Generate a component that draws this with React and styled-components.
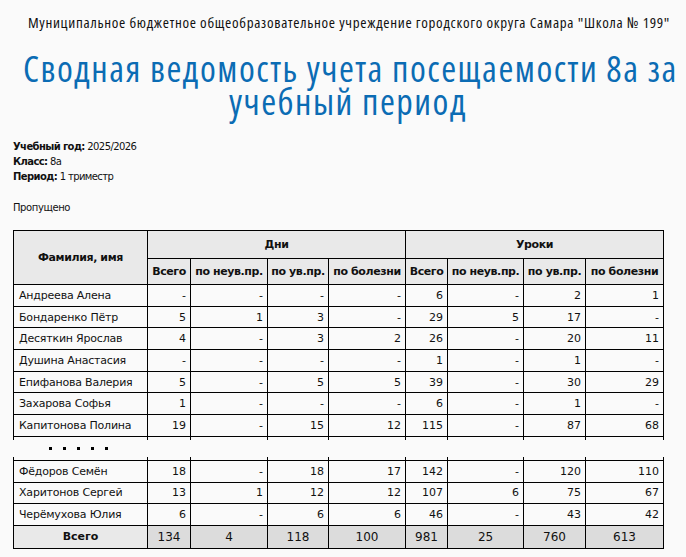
import React from "react";
import styled, { createGlobalStyle } from "styled-components";

const GlobalStyle = createGlobalStyle`
  html, body {
    margin: 0;
    padding: 0;
    background: #fafafa;
  }
  body {
    font-family: "DejaVu Sans", Verdana, sans-serif;
    color: #111;
  }
`;

const days = ["Всего", "по неув.пр.", "по ув.пр.", "по болезни"];

const topRows = [
  ["Андреева Алена", "-", "-", "-", "-", "6", "-", "2", "1"],
  ["Бондаренко Пётр", "5", "1", "3", "-", "29", "5", "17", "-"],
  ["Десяткин Ярослав", "4", "-", "3", "2", "26", "-", "20", "11"],
  ["Душина Анастасия", "-", "-", "-", "-", "1", "-", "1", "-"],
  ["Епифанова Валерия", "5", "-", "5", "5", "39", "-", "30", "29"],
  ["Захарова Софья", "1", "-", "-", "-", "6", "-", "1", "-"],
  ["Капитонова Полина", "19", "-", "15", "12", "115", "-", "87", "68"],
];

const bottomRows = [
  ["Фёдоров Семён", "18", "-", "18", "17", "142", "-", "120", "110"],
  ["Харитонов Сергей", "13", "1", "12", "12", "107", "6", "75", "67"],
  ["Черёмухова Юлия", "6", "-", "6", "6", "46", "-", "43", "42"],
];

const totals = ["134", "4", "118", "100", "981", "25", "760", "613"];

const widths = [134, 43, 77, 61, 77, 42, 76, 62, 78];

const Page = styled.div`
  padding: 12px 13px 10px 13px;
`;

const SchoolName = styled.div`
  font-family: "Open Sans", "Liberation Sans", sans-serif;
  font-stretch: 75%;
  font-size: 15px;
  letter-spacing: 0.7px;
  line-height: 20px;
  white-space: nowrap;
  text-align: center;
  padding-left: 12px;
`;

const Title = styled.h1`
  margin: 20px 0 21px;
  font-family: "Open Sans", "Liberation Sans", sans-serif;
  font-stretch: 75%;
  font-weight: normal;
  font-size: 36px;
  letter-spacing: 1.5px;
  line-height: 33px;
  white-space: nowrap;
  color: #0b6cb4;
  text-align: center;
  padding-left: 10px;
`;

const Info = styled.div`
  font-size: 10px;
  line-height: 15px;
  letter-spacing: -0.6px;
`;

const Label = styled.b`
  font-weight: bold;
`;

const Missed = styled.div`
  font-size: 10px;
  letter-spacing: -0.4px;
  margin: 18px 0 17px;
`;

const Table = styled.table`
  border-collapse: collapse;
  table-layout: fixed;
  width: 650px;
  font-size: 11px;
`;

const Head = styled.th`
  border: 1px solid #000;
  background: #e9e9e9;
  font-weight: bold;
  height: ${(p) => p.$h}px;
  padding: 0;
  letter-spacing: -0.4px;
  white-space: nowrap;
  text-align: center;
  box-sizing: border-box;
`;

const Cell = styled.td`
  border: 1px solid #000;
  height: 21.7px;
  box-sizing: border-box;
  padding: ${(p) => (p.$name ? "0 0 0 5px" : "0 4px 0 0")};
  text-align: ${(p) => (p.$name ? "left" : "right")};
  letter-spacing: ${(p) => (p.$name ? "-0.2px" : "0")};
  white-space: nowrap;
  background: #fafafa;
`;

const TotalCell = styled.td`
  border: 1px solid #000;
  height: 23px;
  box-sizing: border-box;
  text-align: center;
  font-size: ${(p) => (p.$name ? "11px" : "12px")};
  font-weight: ${(p) => (p.$name ? "bold" : "normal")};
  background: ${(p) => (p.$name ? "#e9e9e9" : "#dcdcdc")};
`;

const GapCell = styled.td`
  position: relative;
  height: 23px;
  padding: 0;
  border-top: 1px solid #000;
  border-bottom: 1px solid #000;
  border-left: none;
  border-right: none;

  &::before,
  &::after {
    content: "";
    position: absolute;
    left: -1px;
    width: 1px;
    height: 3px;
    background: #000;
  }
  &::before {
    top: 0;
  }
  &::after {
    bottom: 0;
  }
`;

const EdgeTicks = styled.span`
  &::before,
  &::after {
    content: "";
    position: absolute;
    right: 0;
    width: 1px;
    height: 3px;
    background: #000;
  }
  &::before {
    top: 0;
  }
  &::after {
    bottom: 0;
  }
`;

const Dots = styled.div`
  display: flex;
  gap: 11px;
  padding-left: 35px;
  align-items: center;
`;

const Dot = styled.span`
  width: 3px;
  height: 3px;
  background: #000;
`;

function DataRow({ row }) {
  return (
    <tr>
      {row.map((v, i) => (
        <Cell key={i} $name={i === 0}>
          {v}
        </Cell>
      ))}
    </tr>
  );
}

export default function App() {
  return (
    <>
      <GlobalStyle />
      <Page>
        <SchoolName>
          Муниципальное бюджетное общеобразовательное учреждение городского округа Самара "Школа № 199"
        </SchoolName>
        <Title>
          Сводная ведомость учета посещаемости 8а за
          <br />
          учебный период
        </Title>
        <Info>
          <div>
            <Label>Учебный год:</Label> 2025/2026
          </div>
          <div>
            <Label>Класс:</Label> 8а
          </div>
          <div>
            <Label>Период:</Label> 1 триместр
          </div>
        </Info>
        <Missed>Пропущено</Missed>
        <Table>
          <colgroup>
            {widths.map((w, i) => (
              <col key={i} style={{ width: w }} />
            ))}
          </colgroup>
          <thead>
            <tr>
              <Head rowSpan={2} $h={28}>
                Фамилия, имя
              </Head>
              <Head colSpan={4} $h={28}>
                Дни
              </Head>
              <Head colSpan={4} $h={28}>
                Уроки
              </Head>
            </tr>
            <tr>
              {days.concat(days).map((d, i) => (
                <Head key={i} $h={26}>
                  {d}
                </Head>
              ))}
            </tr>
          </thead>
          <tbody>
            {topRows.map((r) => (
              <DataRow key={r[0]} row={r} />
            ))}
            <tr>
              {widths.map((w, i) => (
                <GapCell key={i}>
                  {i === 0 && (
                    <Dots>
                      {[0, 1, 2, 3, 4].map((d) => (
                        <Dot key={d} />
                      ))}
                    </Dots>
                  )}
                  {i === widths.length - 1 && <EdgeTicks />}
                </GapCell>
              ))}
            </tr>
            {bottomRows.map((r) => (
              <DataRow key={r[0]} row={r} />
            ))}
            <tr>
              <TotalCell $name>Всего</TotalCell>
              {totals.map((t, i) => (
                <TotalCell key={i}>{t}</TotalCell>
              ))}
            </tr>
          </tbody>
        </Table>
      </Page>
    </>
  );
}
